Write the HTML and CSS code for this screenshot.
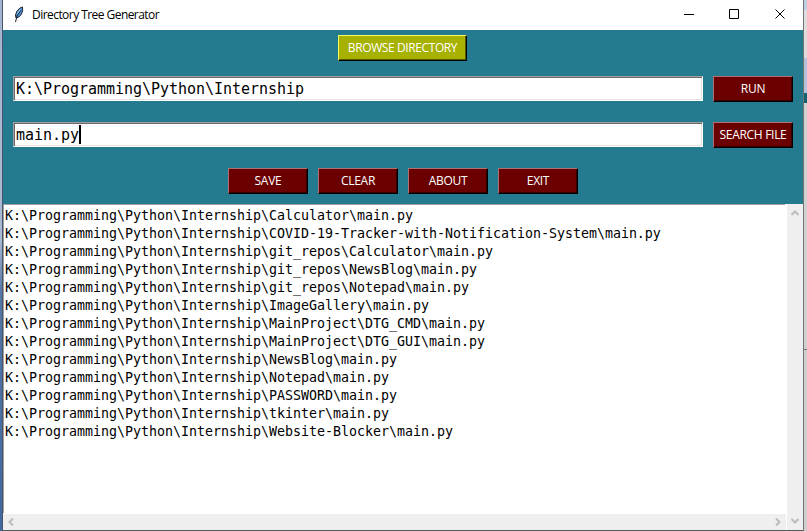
FILE: index.html
```html
<!DOCTYPE html>
<html lang="en">
<head>
<meta charset="utf-8">
<title>Directory Tree Generator</title>
<link rel="stylesheet" href="styles.css">
</head>
<body>
<div class="desktop">
  <div class="edge-left"></div>
  <main class="window">
    <header class="titlebar">
      <svg class="feather" width="12" height="17" viewBox="0 0 12 17"><path d="M3 12L2.500 9Q3.500 4 7 2L9.500 1Q10.300 5 8.500 8Q7 11 3.500 12Z" fill="#4b93d6" stroke="#1b2632"/><path d="M2.500 16L4 10L8 4" fill="none" stroke="#182330"/><path d="M4 8L7.500 3" stroke="#a5ccef"/></svg>
      <h1 class="title">Directory Tree Generator</h1>
      <svg class="controls" width="106" height="12" viewBox="0 0 106 12" fill="none" stroke="#000"><path d="M0 6.500H10M45.500 1.500H54.500V10.500H45.500ZM91.500 1.500L100.500 10.500M100.500 1.500L91.500 10.500"/></svg>
    </header>
    <section class="panel">
      <div class="row browse"><button class="btn olive">BROWSE DIRECTORY</button></div>
      <div class="row field-row"><div class="entry">K:\Programming\Python\Internship</div><button class="btn">RUN</button></div>
      <div class="row field-row"><div class="entry">main.py<i class="caret"></i></div><button class="btn">SEARCH FILE</button></div>
      <div class="row actions"><button class="btn">SAVE</button><button class="btn">CLEAR</button><button class="btn">ABOUT</button><button class="btn">EXIT</button></div>
    </section>
    <section class="output">
      <pre class="log">K:\Programming\Python\Internship\Calculator\main.py
K:\Programming\Python\Internship\COVID-19-Tracker-with-Notification-System\main.py
K:\Programming\Python\Internship\git_repos\Calculator\main.py
K:\Programming\Python\Internship\git_repos\NewsBlog\main.py
K:\Programming\Python\Internship\git_repos\Notepad\main.py
K:\Programming\Python\Internship\ImageGallery\main.py
K:\Programming\Python\Internship\MainProject\DTG_CMD\main.py
K:\Programming\Python\Internship\MainProject\DTG_GUI\main.py
K:\Programming\Python\Internship\NewsBlog\main.py
K:\Programming\Python\Internship\Notepad\main.py
K:\Programming\Python\Internship\PASSWORD\main.py
K:\Programming\Python\Internship\tkinter\main.py
K:\Programming\Python\Internship\Website-Blocker\main.py</pre>
      <div class="hbar">
        <svg width="6" height="8" viewBox="0 0 6 8"><path d="M5 .500L1.500 4L5 7.500"/></svg>
        <svg width="6" height="8" viewBox="0 0 6 8"><path d="M1 .500L4.500 4L1 7.500"/></svg>
      </div>
      <div class="vbar">
        <svg width="8" height="6" viewBox="0 0 8 6"><path d="M.500 5L4 1.500L7.500 5"/></svg>
        <svg width="8" height="6" viewBox="0 0 8 6"><path d="M.500 1L4 4.500L7.500 1"/></svg>
      </div>
    </section>
  </main>
  <div class="edge-right"></div>
</div>
</body>
</html>
```
FILE: styles.css
```css
* { box-sizing: border-box; }
body { margin: 0; overflow: hidden; font-family: "Open Sans", sans-serif; font-size: 12px; color: #000; }
.desktop { display: grid; grid-template-columns: 3px 800px 4px; height: 531px; }
.edge-left { background: linear-gradient(#a3b5d2, #a9bad3 45%, #5376a6 55%, #41689f); border-right: 1px solid #47566a; }
.edge-right { border-left: 1px solid #747474; background: linear-gradient(#bccde4 0 10px, #dedcdc 10px 58px, #b4c3da 58px 93px, #13606f 93px 103px, #d0d0d0 103px 349px, #777 349px 350px, #cecece 350px); }
.window { display: grid; grid-template-rows: 30px 174px 326px; border-bottom: 1px solid #555b63; background: #fff; }
.titlebar { display: flex; align-items: center; padding: 0 13px 2px 10px; }
.title { flex: 1; margin: 2px 0 0 7px; font-size: 12px; font-weight: 400; line-height: 16px; letter-spacing: -.55px; }
.panel { background: #247b8f; }
.row { display: flex; }
.browse { justify-content: center; padding-top: 5px; height: 46px; }
.btn { width: 80px; height: 26px; margin: 0; padding: 0; border: 1px solid; border-color: #b07070 #000 #000 #b07070; box-shadow: inset -1px -1px #350000; background: #6a0000; color: #fff; font: 12px/22px "Open Sans", sans-serif; letter-spacing: -.3px; white-space: nowrap; }
.olive { width: 129px; margin-right: 1px; background: #a6b100; border-color: #f3ff65 #000 #000 #f3ff65; box-shadow: inset -1px -1px #535900; letter-spacing: -.4px; }
.field-row { height: 46px; padding: 0 10px; gap: 10px; }
.entry { display: flex; width: 690px; height: 25px; padding: 0 1px 0 2px; border: 1px solid; border-color: #a0a0a0 #fff #fff #a0a0a0; box-shadow: inset 1px 1px #696969, inset -1px -1px #e3e3e3; background: #fff; font: 15px/25px "DejaVu Sans Mono", monospace; letter-spacing: -.03px; }
.caret { width: 2px; height: 19px; margin-top: 2px; background: #000; }
.actions { justify-content: center; gap: 10px; }
.output { display: grid; grid-template-columns: 783px 17px; grid-template-rows: 310px 16px; }
.log { margin: 0 1px 1px 0; padding: 2px 0 0 1px; border: solid #a0a0a0; border-width: 1px 0 0 1px; font: 13.3px/18px "DejaVu Sans Mono", monospace; letter-spacing: -.007px; }
.hbar, .vbar { display: flex; justify-content: space-between; align-items: center; background: #efefef; }
.hbar { grid-row: 2; grid-column: 1; padding: 0 5px; }
.vbar { grid-row: 1 / 3; grid-column: 2; flex-direction: column; margin-left: 1px; padding: 6px 0; }
.hbar svg, .vbar svg { fill: none; stroke: #bcbcbc; stroke-width: 2; }
```
